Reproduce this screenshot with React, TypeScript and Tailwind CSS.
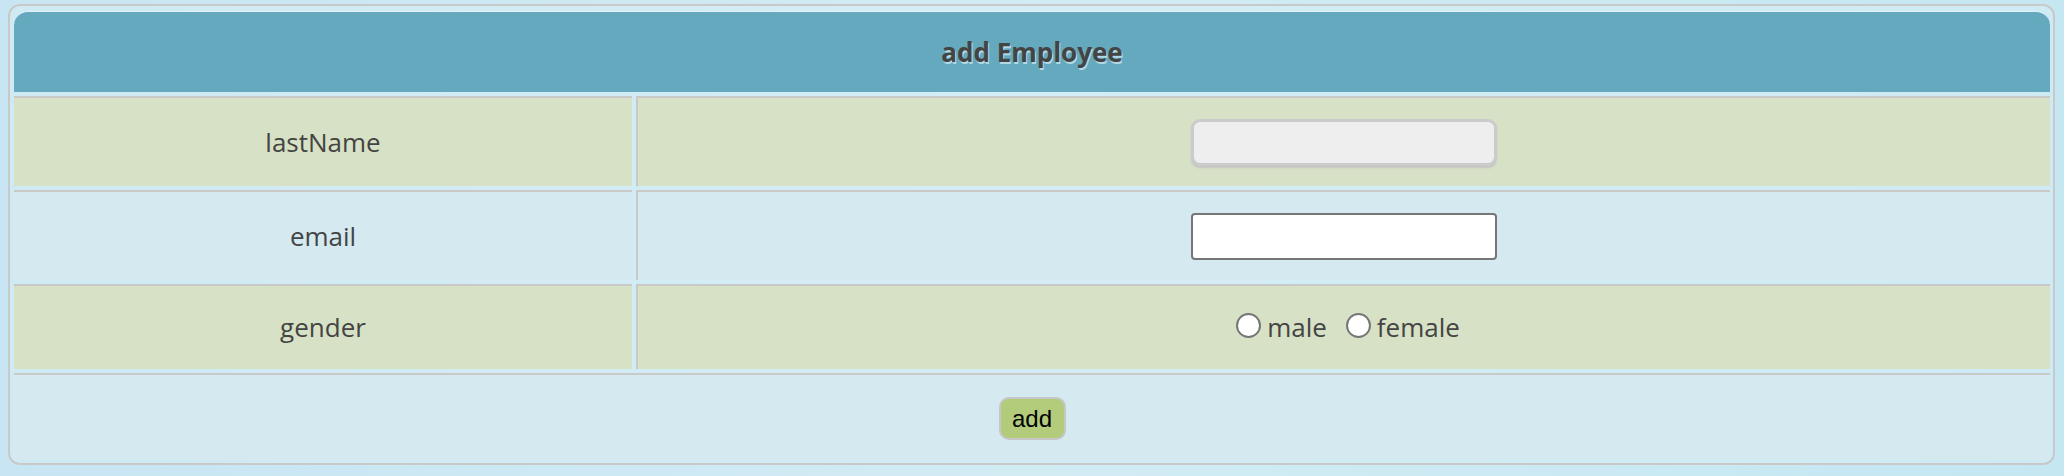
import React from "react"

const rowCls = "grid grid-cols-[618px_1fr] gap-x-[4px]"

const Label = ({ children, bg }: { children: React.ReactNode; bg: string }) => (
  <div className={`${bg} border-t-2 border-[#c9c9c9] flex items-center justify-center text-[26px] text-[#444]`}>
    {children}
  </div>
)

const Radio = ({ label }: { label: string }) => (
  <label className="flex items-center">
    <span className="w-[25px] h-[25px] rounded-full border-2 border-[#767676] bg-white" />
    <span className="ml-[6px] mt-[4px] leading-none">{label}</span>
  </label>
)

export default function App() {
  return (
    <div
      className="w-full h-[476px] pt-[4px] pl-[8px] pr-[9px] bg-gradient-to-r from-[#c7e5f3] via-[#d2ecf4] to-[#c4e7f2]"
      style={{ fontFamily: "'Open Sans', 'Noto Sans', sans-serif" }}
    >
      <div className="border-2 border-[#c9c9c9] rounded-[12px] pt-[5px] pl-[4px] pr-[3px] pb-[3px] bg-[#d6edf5]/60">
        <div className="h-[81px] rounded-t-[14px] bg-[#65a9be] border-t border-[#e4f3f8] flex items-center justify-center">
          <h1 className="text-[26px] font-bold text-[#444] [text-shadow:1px_2px_0_#b3d9e5]">add Employee</h1>
        </div>

        <div className="flex flex-col gap-y-[4px] mt-[4px]">
          <div className={`${rowCls} h-[90px]`}>
            <Label bg="bg-[#d7e1c5]">lastName</Label>
            <div className="bg-[#d7e1c5] border-t-2 border-l-2 border-[#c9c9c9] flex items-center justify-center">
              <input
                disabled
                className="w-[306px] h-[47px] bg-[#eeeeee] border-[3px] border-[#cbcbcb] rounded-[9px] shadow-[0_2px_2px_#c4c4c4] outline-none"
              />
            </div>
          </div>

          <div className={`${rowCls} h-[90px]`}>
            <Label bg="bg-[#d4e9f0]">email</Label>
            <div className="bg-[#d4e9f0] border-t-2 border-l-2 border-[#c9c9c9] flex items-center justify-center">
              <input
                type="email"
                className="w-[306px] h-[47px] bg-white border-2 border-[#767676] rounded-[4px] outline-none"
              />
            </div>
          </div>

          <div className={`${rowCls} h-[85px]`}>
            <Label bg="bg-[#d7e1c5]">gender</Label>
            <div className="bg-[#d7e1c5] border-t-2 border-l-2 border-[#c9c9c9] flex items-center justify-center text-[26px] text-[#444]">
              <div className="flex items-center gap-x-[19px] pl-[8px] mb-[5px]">
                <Radio label="male" />
                <Radio label="female" />
              </div>
            </div>
          </div>

          <div className="h-[87px] bg-[#d4e9f0] border-t-2 border-[#c9c9c9] flex items-center justify-center">
            <button
              className="w-[67px] h-[43px] mt-[2px] bg-[#b2cc7c] border-2 border-[#c6c6c6] rounded-[10px] text-[24px] text-black leading-none"
              style={{ fontFamily: "'Liberation Sans', Arial, sans-serif" }}
            >
              add
            </button>
          </div>
        </div>
      </div>
    </div>
  )
}
